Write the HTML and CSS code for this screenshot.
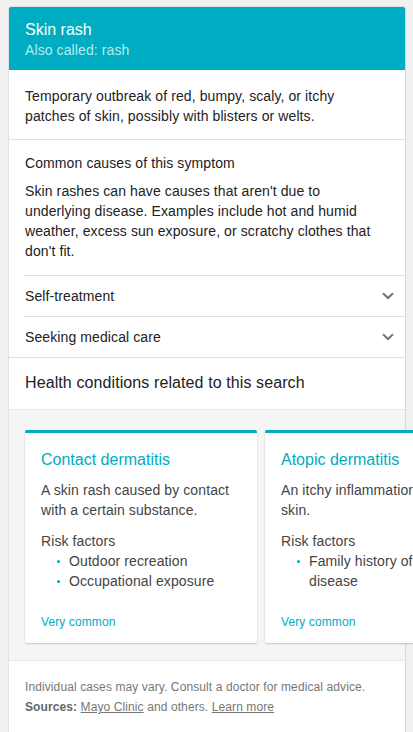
FILE: index.html
```html
<!DOCTYPE html>
<html>
<head>
<meta charset="utf-8">
<link rel="stylesheet" href="styles.css">
</head>
<body>
<div class="panel">
  <div class="header">
    <div class="title">Skin rash</div>
    <div class="subtitle">Also called: rash</div>
  </div>
  <div class="desc">Temporary outbreak of red, bumpy, scaly, or itchy patches of skin, possibly with blisters or welts.</div>
  <div class="causes">
    <div class="causes-head">Common causes of this symptom</div>
    <div class="causes-text">Skin rashes can have causes that aren't due to underlying disease. Examples include hot and humid weather, excess sun exposure, or scratchy clothes that don't fit.</div>
  </div>
  <div class="rows">
    <div class="row">
      <span>Self-treatment</span>
      <svg class="chev" width="12" height="8" viewBox="0 0 12 8"><path d="M1 1.2 L6 6 L11 1.2" fill="none" stroke="#757575" stroke-width="2"/></svg>
    </div>
    <div class="row">
      <span>Seeking medical care</span>
      <svg class="chev" width="12" height="8" viewBox="0 0 12 8"><path d="M1 1.2 L6 6 L11 1.2" fill="none" stroke="#757575" stroke-width="2"/></svg>
    </div>
  </div>
  <div class="related">Health conditions related to this search</div>
  <div class="carousel">
    <div class="cond">
      <div class="cond-title">Contact dermatitis</div>
      <div class="cond-desc">A skin rash caused by contact with a certain substance.</div>
      <div class="cond-risk">Risk factors</div>
      <ul class="cond-list">
        <li>Outdoor recreation</li>
        <li>Occupational exposure</li>
      </ul>
      <div class="cond-freq">Very common</div>
    </div>
    <div class="cond">
      <div class="cond-title">Atopic dermatitis</div>
      <div class="cond-desc">An itchy inflammation of the skin.</div>
      <div class="cond-risk">Risk factors</div>
      <ul class="cond-list">
        <li>Family history of atopic disease</li>
      </ul>
      <div class="cond-freq">Very common</div>
    </div>
  </div>
  <div class="footer">
    <div>Individual cases may vary. Consult a doctor for medical advice.</div>
    <div><b>Sources:</b> <a href="#">Mayo Clinic</a> and others. <a href="#">Learn more</a></div>
  </div>
</div>
</body>
</html>
```
FILE: styles.css
```css
html, body {
  margin: 0;
  padding: 0;
  overflow: hidden;
}
body {
  background: #f1f1f1;
  font-family: "Liberation Sans", Arial, sans-serif;
  color: #222;
  font-size: 14px;
  line-height: 20px;
  letter-spacing: 0.1px;
}
.panel {
  margin: 7px 0 0 9px;
  width: 396px;
  min-height: 725px;
  background: #fff;
  border-radius: 2px 2px 0 0;
  box-shadow: 0 0 0 1px rgba(0,0,0,0.06), 1px 0 1px rgba(0,0,0,0.05);
}
.header {
  background: #00acc1;
  padding: 13px 16px 10px;
  border-radius: 2px 2px 0 0;
}
.title {
  color: #fff;
  font-size: 16px;
  line-height: 20px;
  letter-spacing: 0;
}
.subtitle {
  color: #b2ebf2;
  font-size: 14px;
  line-height: 20px;
}
.desc {
  padding: 16px 40px 13px 16px;
  border-bottom: 1px solid #e0e0e0;
}
.causes {
  padding: 13px 22px 14px 16px;
  display: flex;
  flex-direction: column;
  gap: 8px;
}
.rows {
  border-bottom: 1px solid #e0e0e0;
}
.row {
  margin-left: 15px;
  padding: 10px 11px 10px 1px;
  border-top: 1px solid #e0e0e0;
  display: flex;
  justify-content: space-between;
  align-items: center;
}
.chev {
  display: block;
}
.related {
  font-size: 16px;
  line-height: 20px;
  padding: 15px 16px 16px;
  border-bottom: 1px solid #e8e8e8;
}
.carousel {
  background: #f5f5f5;
  padding: 20px 16px 17px;
  display: flex;
  gap: 8px;
  border-bottom: 1px solid #e8e8e8;
}
.cond {
  flex: 0 0 232px;
  box-sizing: border-box;
  background: #fff;
  border-top: 3px solid #00acc1;
  border-radius: 2px;
  box-shadow: 0 1px 2px rgba(0,0,0,0.2);
  padding: 17px 16px 13px;
  display: flex;
  flex-direction: column;
  color: #444;
}
.cond-title {
  color: #00acc1;
  font-size: 16px;
  line-height: 20px;
  letter-spacing: 0;
  margin-bottom: 10px;
}
.cond-risk {
  margin-top: 11px;
}
.cond-list {
  list-style: none;
  margin: 0;
  padding: 0 0 0 28px;
}
.cond-list li {
  position: relative;
}
.cond-list li::before {
  content: "";
  position: absolute;
  left: -12px;
  top: 9px;
  width: 3px;
  height: 3px;
  border-radius: 50%;
  background: #00acc1;
}
.cond-freq {
  margin-top: auto;
  padding-top: 23px;
  color: #00acc1;
  font-size: 12px;
  line-height: 16px;
}
.footer {
  padding: 16px 16px 20px;
  font-size: 12px;
  line-height: 20px;
  color: #777;
}
.footer b {
  color: #666;
}
.footer a {
  color: #777;
  text-decoration: underline;
}
```
